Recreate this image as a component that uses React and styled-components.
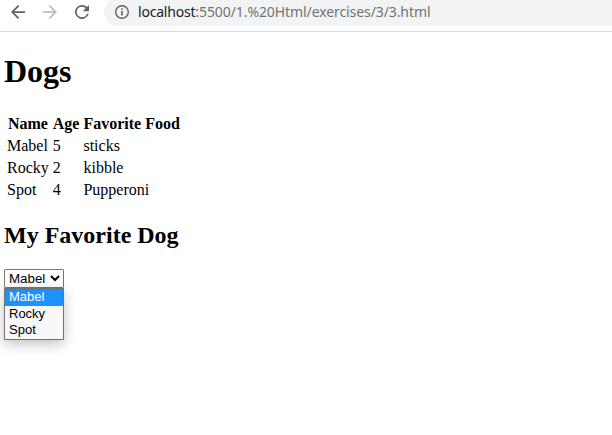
import React from "react";
import styled, { createGlobalStyle } from "styled-components";

const GlobalStyle = createGlobalStyle`
  html, body { margin: 0; background: #fff; overflow: hidden; }
`;

const Window = styled.div`
  height: 435px;
  overflow: hidden;
  color: #000;
  font: 16px "Liberation Serif", serif;
`;

const Toolbar = styled.header`
  box-sizing: border-box;
  display: flex;
  align-items: flex-start;
  height: 32px;
  border-bottom: 1px solid #d9dadc;
`;

const NavButtons = styled.nav`
  display: flex;
  gap: 18px;
  width: 104px;
  padding: 5px 0 0 11px;
  box-sizing: border-box;
`;

const NavIcon = styled.svg`
  flex: none;
  width: ${(p) => p.$size || 14}px;
  height: ${(p) => p.$size || 14}px;
  fill: ${(p) => p.$color || "#5f6368"};
`;

const AddressBar = styled.div`
  box-sizing: border-box;
  display: flex;
  align-items: center;
  flex: 1;
  gap: 8px;
  height: 28px;
  margin-top: -2px;
  padding-left: 10px;
  border-radius: 14px 0 0 14px;
  background: #f1f3f4;
`;

const Url = styled.span`
  font: 14px/24px "Noto Sans", sans-serif;
  letter-spacing: ${(p) => p.$spacing};
  color: ${(p) => p.$color};
  white-space: nowrap;
`;

const Address = styled.div`
  display: flex;
  height: 24px;
`;

const Page = styled.main`
  display: flow-root;
  padding-left: 4px;
`;

const Title = styled.h1`
  margin: 21.44px 0;
  font-size: 32px;
  line-height: 37px;
`;

const Subtitle = styled.h2`
  margin: 19.92px 0;
  font-size: 24px;
  line-height: 27px;
`;

const DogTable = styled.table`
  border-spacing: 2px;
  line-height: 18px;
  th, td { padding: 1px; }
`;

const SelectBox = styled.div`
  position: relative;
  width: 60px;
  font: 13.333px "Liberation Sans", sans-serif;
`;

const SelectButton = styled.div`
  box-sizing: border-box;
  display: flex;
  align-items: center;
  justify-content: space-between;
  height: 19px;
  padding: 0 3px 0 4px;
  border: 1px solid #767676;
  border-radius: 1px;
  line-height: 17px;
`;

const Chevron = styled.svg`
  width: 10px;
  height: 8px;
  fill: none;
  stroke: #000;
  stroke-width: 2;
`;

const Options = styled.div`
  position: absolute;
  top: 19px;
  left: 0;
  box-sizing: border-box;
  width: 60px;
  height: 52px;
  border: 1px solid #737373;
  border-top-width: 2px;
  background: #f7f7f7;
  box-shadow: 0 4px 12px rgba(0, 0, 0, 0.24);
  font-size: 13px;
`;

const Option = styled.div`
  height: ${(p) => (p.$active ? 16 : 16.5)}px;
  padding-left: 4px;
  line-height: ${(p) => (p.$active ? 14 : 16)}px;
  color: ${(p) => (p.$active ? "#fff" : "#000")};
  background: ${(p) => (p.$active ? "#1e90ff" : "transparent")};
`;

const dogs = [
  { name: "Mabel", age: 5, food: "sticks" },
  { name: "Rocky", age: 2, food: "kibble" },
  { name: "Spot", age: 4, food: "Pupperoni" },
];

export default function App() {
  return (
    <Window>
      <GlobalStyle />
      <Toolbar>
        <NavButtons>
          <NavIcon viewBox="4 4 16 16">
            <path d="M20 11H7.83l5.59-5.59L12 4l-8 8 8 8 1.41-1.41L7.83 13H20z" />
          </NavIcon>
          <NavIcon viewBox="4 4 16 16" $color="#babcbe">
            <path d="M4 11h12.17l-5.59-5.59L12 4l8 8-8 8-1.41-1.41L16.17 13H4z" />
          </NavIcon>
          <NavIcon viewBox="4 4 16 16">
            <path d="M17.65 6.35A8 8 0 1 0 19.73 14h-2.08A6 6 0 1 1 12 6c1.66 0 3.14.69 4.22 1.78L13 11h7V4z" />
          </NavIcon>
        </NavButtons>
        <AddressBar>
          <NavIcon viewBox="0 0 16 16" $size={16}>
            <path d="M7.2 7h1.6v4.5H7.2zm0-2.8h1.6v1.6H7.2zM8 1a7 7 0 1 0 0 14A7 7 0 0 0 8 1zm0 1.4a5.6 5.6 0 1 1 0 11.2A5.6 5.6 0 0 1 8 2.4z" />
          </NavIcon>
          <Address>
            <Url $color="#202124" $spacing="-0.2px">localhost</Url>
            <Url $color="#707376" $spacing="-0.09px">:5500/1.%20Html/exercises/3/3.html</Url>
          </Address>
        </AddressBar>
      </Toolbar>
      <Page>
        <Title>Dogs</Title>
        <DogTable>
          <thead>
            <tr><th>Name</th><th>Age</th><th>Favorite Food</th></tr>
          </thead>
          <tbody>
            {dogs.map((dog) => (
              <tr key={dog.name}><td>{dog.name}</td><td>{dog.age}</td><td>{dog.food}</td></tr>
            ))}
          </tbody>
        </DogTable>
        <Subtitle>My Favorite Dog</Subtitle>
        <SelectBox>
          <SelectButton>
            Mabel
            <Chevron viewBox="0 0 10 8"><path d="M1 2l4 4 4-4" /></Chevron>
          </SelectButton>
          <Options>
            {dogs.map((dog, i) => (
              <Option key={dog.name} $active={i === 0}>{dog.name}</Option>
            ))}
          </Options>
        </SelectBox>
      </Page>
    </Window>
  );
}
